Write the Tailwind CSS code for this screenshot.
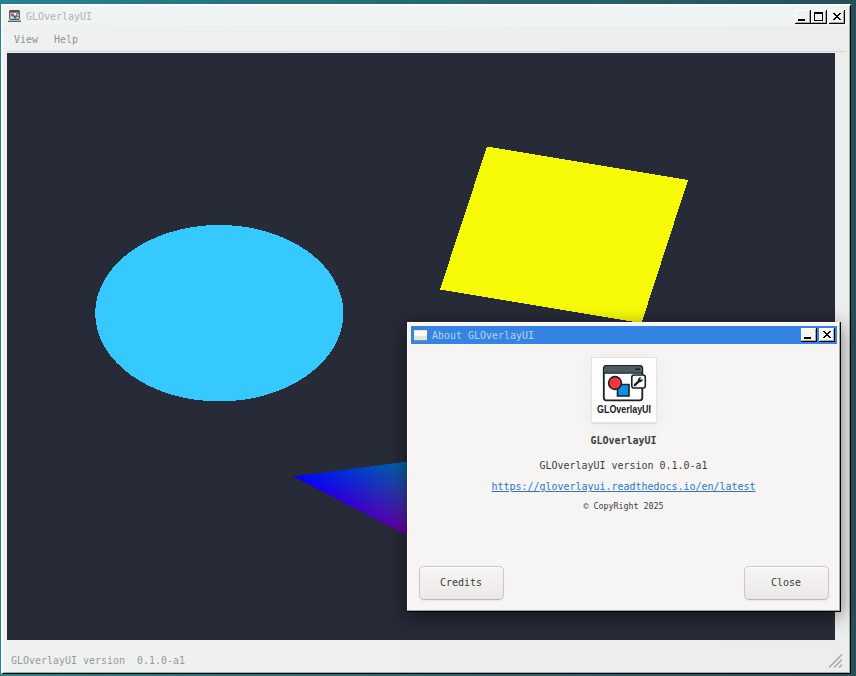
<!DOCTYPE html>
<html lang="en">
<head>
<meta charset="utf-8">
<title>GLOverlayUI</title>
<script src="https://cdn.jsdelivr.net/npm/@tailwindcss/browser@4"></script>
</head>
<body class="w-[856px] h-[676px] overflow-hidden bg-linear-to-r from-[#248292] to-[#245058] font-['DejaVu_Sans_Mono',monospace] text-[9.97px] leading-[12px]">
<div class="relative w-[856px] h-[676px] pt-[4px] pl-[1px]">

  <!-- main window -->
  <main class="w-[850px] h-[670px] flex flex-col border-t-2 border-l-2 border-t-[#fbfcfc] border-l-[#f8fafa] border-r border-b border-r-black border-b-black bg-linear-to-r from-[#eef1f0] to-[#ebeeed] shadow-[inset_-1px_-1px_0_#aaa9a2]">
    <header class="h-[20px] mr-px flex items-center pl-[5px] pr-[4px] bg-[#f0f3f3]">
      <svg class="w-[13px] h-[13px]" viewBox="0 0 13 13"><rect x="1.7" y=".7" width="9.6" height="8.6" rx="1" fill="#e7eeee" stroke="#4a5659" stroke-width="1.2"/><path d="M1.5 1.7h10" stroke="#4a5659" stroke-width="2"/><circle cx="4.4" cy="5" r="1.8" fill="#e04048"/><path d="M5.5 5.5h3v3h-3z" fill="#2370ae"/><path d="M8.5 3.5h3v3h-3z" fill="#a5b1b1" stroke="#4a5659" stroke-width=".6"/><path d="M0 11.3h13" stroke="#5c6466" stroke-width="1.4"/></svg>
      <h1 class="ml-[5px] mt-[2px] text-[#aeb3b3]">GLOverlayUI</h1>
      <div class="ml-auto flex mt-[2px]">
        <svg class="w-[16px] h-[14px]" viewBox="0 0 16 14" shape-rendering="crispEdges"><path fill="#000" d="M0 0h16v14H0z"/><path fill="#fff" d="M0 0h15v13H0z"/><path fill="#aaa" d="M1 1h14v12H1z"/><path fill="#f0f2f1" d="M1 1h13v11H1z"/><path fill="#000" d="M3 9h7v2H3z"/></svg>
        <svg class="w-[16px] h-[14px]" viewBox="0 0 16 14" shape-rendering="crispEdges"><path fill="#000" d="M0 0h16v14H0z"/><path fill="#fff" d="M0 0h15v13H0z"/><path fill="#aaa" d="M1 1h14v12H1z"/><path fill="#f0f2f1" d="M1 1h13v11H1z"/><path fill="#000" fill-rule="evenodd" d="M3 2h9v9H3zM4 4v6h7V4z"/></svg>
        <svg class="ml-[2px] w-[16px] h-[14px]" viewBox="0 0 16 14" shape-rendering="crispEdges"><path fill="#000" d="M0 0h16v14H0z"/><path fill="#fff" d="M0 0h15v13H0z"/><path fill="#aaa" d="M1 1h14v12H1z"/><path fill="#f0f2f1" d="M1 1h13v11H1z"/><path fill="#000" d="M4 3h2v1H4zM10 3h2v1h-2zM5 4h2v1H5zM9 4h2v1H9zM6 5h4v1H6zM7 6h2v1H7zM6 7h4v1H6zM5 8h2v1H5zM9 8h2v1H9zM4 9h2v1H4zM10 9h2v1h-2z"/></svg>
      </div>
    </header>
    <nav class="h-[26px] ml-[3px] mr-[4px] pl-[8px] pt-[8px] flex gap-[16px] border-b border-[#d0d6d5] text-[#8e9494]">
      <span>View</span><span>Help</span>
    </nav>
    <svg class="mt-px ml-[4px] w-[828px] h-[587px] shrink-0" viewBox="7 53 828 587" shape-rendering="crispEdges">
      <defs>
        <linearGradient id="b" gradientUnits="userSpaceOnUse" x1="293" y1="477" x2="407" y2="477"><stop stop-color="#0000ff"/><stop offset="1" stop-color="#0000a0"/></linearGradient>
        <linearGradient id="g" gradientUnits="userSpaceOnUse" x1="293" y1="477" x2="322.5" y2="419"><stop stop-color="#000000"/><stop offset="1" stop-color="#006900"/></linearGradient>
        <linearGradient id="r" gradientUnits="userSpaceOnUse" x1="293" y1="477" x2="302.4" y2="548.8"><stop stop-color="#000000"/><stop offset="1" stop-color="#690000"/></linearGradient>
      </defs>
      <path fill="#272a37" d="M7 53h828v587H7z"/>
      <ellipse cx="219.3" cy="313.2" rx="124.1" ry="88.2" fill="#36c9ff"/>
      <path fill="#f7fb08" d="M487 146.500 688 180 641.500 323 440 289.500z"/>
      <g class="isolate">
        <path fill="url(#b)" d="M293 476.5 420 460V542z"/>
        <path class="mix-blend-screen" fill="url(#g)" d="M293 476.5 420 460V542z"/>
        <path class="mix-blend-screen" fill="url(#r)" d="M293 476.5 420 460V542z"/>
      </g>
    </svg>
    <footer class="flex-1 flex justify-between pl-[8px] pr-[7px] pt-[15px] text-[#959a9a]">
      <span class="whitespace-pre">GLOverlayUI version  0.1.0-a1</span>
      <svg class="w-[14px] h-[14px] mt-[-1px]" viewBox="0 0 14 14" stroke="#aaa9a4" stroke-width="1.5"><path d="M0 13.5l13-13M5 13.5l8-8M10 13.5l3-3"/></svg>
    </footer>
  </main>

  <!-- about dialog -->
  <section class="absolute left-[407px] top-[322px] w-[434px] h-[290px] flex flex-col bg-[#f6f5f4] border-r border-b border-black shadow-[inset_-1px_-1px_0_#aaa69f,inset_1px_1px_0_#fff,0_4px_18px_rgba(0,0,0,0.5)] text-[#3a4042]">
    <header class="mt-[4px] ml-[4px] mr-[3px] h-[18px] pl-[3px] pr-[2px] flex items-center bg-[#3584e4]">
      <svg class="w-[13px] h-[12px]" viewBox="0 0 13 12" shape-rendering="crispEdges"><path fill="#888e88" d="M0 0h13v12H0z"/><path fill="#e0e5e0" d="M0 1h13v10H0z"/><path fill="#f8faf8" d="M0 2h13v5H0z"/><path fill="#5579a7" d="M0 0h13v1H0z"/></svg>
      <h2 class="ml-[5px] mt-px text-[#b4d3f8]">About GLOverlayUI</h2>
      <div class="ml-auto flex gap-[2px]">
        <svg class="w-[16px] h-[14px]" viewBox="0 0 16 14" shape-rendering="crispEdges"><path fill="#000" d="M0 0h16v14H0z"/><path fill="#fff" d="M0 0h15v13H0z"/><path fill="#aaa" d="M1 1h14v12H1z"/><path fill="#f6f5f4" d="M1 1h13v11H1z"/><path fill="#000" d="M3 9h7v2H3z"/></svg>
        <svg class="w-[16px] h-[14px]" viewBox="0 0 16 14" shape-rendering="crispEdges"><path fill="#000" d="M0 0h16v14H0z"/><path fill="#fff" d="M0 0h15v13H0z"/><path fill="#aaa" d="M1 1h14v12H1z"/><path fill="#f6f5f4" d="M1 1h13v11H1z"/><path fill="#000" d="M4 3h2v1H4zM10 3h2v1h-2zM5 4h2v1H5zM9 4h2v1H9zM6 5h4v1H6zM7 6h2v1H7zM6 7h4v1H6zM5 8h2v1H5zM9 8h2v1H9zM4 9h2v1H4zM10 9h2v1h-2z"/></svg>
      </div>
    </header>
    <div class="flex-1 flex flex-col items-center pt-[14px]">
      <svg class="w-[64px] h-[64px] bg-[#fefefe] shadow-[0_0_0_1px_#e4e3e2,0_1px_1px_#888,0_2px_18px_rgba(0,0,0,0.06)]" viewBox="0 0 64 64">
        <rect x="11.8" y="7.8" width="38.5" height="34.5" rx="2.5" fill="#fff" stroke="#172126" stroke-width="1.8"/>
        <path d="M12.5 8.5h37v6h-37z" fill="#4c5a62"/><path d="M12 15h38" stroke="#172126" stroke-width="1.6"/><path d="M43.5 11.2h4.5" stroke="#172126" stroke-width="1.6"/>
        <path d="M25.5 26.5h11.5v11.5h-11.5z" fill="#0b91e5" stroke="#172126" stroke-width="1.6"/>
        <circle cx="23" cy="25" r="6.4" fill="#fb3440" stroke="#172126" stroke-width="1.6"/>
        <rect x="39.8" y="17" width="13.5" height="13" rx="2.3" fill="#fff" stroke="#172126" stroke-width="1.6"/>
        <path d="M42.8 27.2 47.5 22.7" stroke="#172126" stroke-width="2.3" stroke-linecap="round"/><path d="M48.8 19.3a3 3 0 0 0-2.6 4.1 3 3 0 0 0 4.6-1.9l-2 .6-.9-.9z" fill="#172126" stroke="#172126" stroke-width=".5"/>
        <text transform="translate(5 54.8) scale(.88 1)" textLength="61.4" lengthAdjust="spacingAndGlyphs" font-family="Liberation Sans, sans-serif" font-weight="700" font-size="10.5" fill="#172126">GLOverlayUI</text>
      </svg>
      <p class="mt-[13px] font-bold">GLOverlayUI</p>
      <p class="mt-[13px]">GLOverlayUI version 0.1.0-a1</p>
      <a class="mt-[9px] underline text-[#2b74d0]">https://gloverlayui.readthedocs.io/en/latest</a>
      <p class="mt-[7px] text-[8.33px]">© CopyRight 2025</p>
    </div>
    <footer class="flex justify-between pl-[12px] pr-[11px] pb-[11px]">
      <button class="w-[85px] h-[34px] pr-px rounded-[5px] border border-[#cdc7c2] border-b-[#bfb8b1] bg-linear-to-b from-[#f6f5f4] to-[#eae9e7] shadow-[inset_0_1px_#fff,0_1px_2px_rgba(0,0,0,0.07)]">Credits</button>
      <button class="w-[85px] h-[34px] pr-px rounded-[5px] border border-[#cdc7c2] border-b-[#bfb8b1] bg-linear-to-b from-[#f6f5f4] to-[#eae9e7] shadow-[inset_0_1px_#fff,0_1px_2px_rgba(0,0,0,0.07)]">Close</button>
    </footer>
  </section>
</div>
</body>
</html>
